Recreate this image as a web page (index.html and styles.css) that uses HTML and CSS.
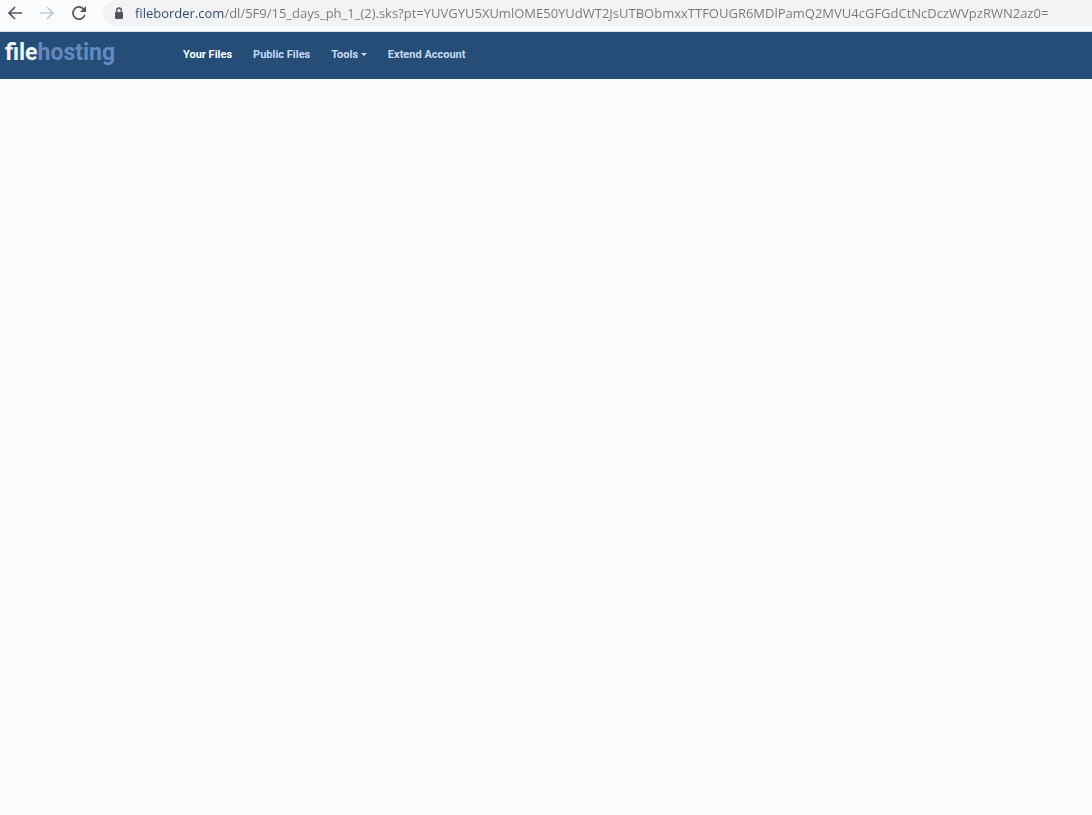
FILE: index.html
```html
<!DOCTYPE html>
<html lang="en">
<head>
    <meta charset="UTF-8">
    <meta name="viewport" content="width=device-width, initial-scale=1.0">
    <title>filehosting</title>
    <link rel="stylesheet" href="styles.css">
</head>
<body>
    <!-- Browser toolbar -->
    <div class="toolbar">
        <button type="button" class="tool" aria-label="Back">
            <svg width="16" height="16" viewBox="0 0 16 16"><path d="M15 8H2M8 2L2 8l6 6"/></svg>
        </button>
        <button type="button" class="tool tool-forward" aria-label="Forward" disabled>
            <svg width="16" height="16" viewBox="0 0 16 16"><path d="M1 8h13M8 2l6 6-6 6"/></svg>
        </button>
        <button type="button" class="tool" aria-label="Reload">
            <svg width="16" height="16" viewBox="0 0 16 16"><path d="M13.8 10A6.1 6.1 0 1 1 12.4 3.8L14 5.4"/><path class="solid" d="M15 1v6H9z"/></svg>
        </button>
        <div class="address">
            <svg class="lock" width="10" height="13" viewBox="0 0 10 13"><rect x="1" y="5" width="8" height="7" rx="1"/><path d="M2.7 6V3.3a2.3 2.3 0 0 1 4.6 0V6"/></svg>
            <input type="text" class="url" aria-label="Address" spellcheck="false" value="fileborder.com/dl/5F9/15_days_ph_1_(2).sks?pt=YUVGYU5XUmlOME50YUdWT2JsUTBObmxxTTFOUGR6MDlPamQ2MVU4cGFGdCtNcDczWVpzRWN2az0=">
        </div>
    </div>

    <!-- Site header -->
    <header class="navbar">
        <a href="#" class="brand"><span class="brand-file">file</span>hosting</a>
        <nav class="menu">
            <a href="#" class="active">Your Files</a>
            <a href="#">Public Files</a>
            <a href="#">Tools <span class="caret"></span></a>
            <a href="#">Extend Account</a>
        </nav>
    </header>

    <main class="content"></main>
</body>
</html>
```

FILE: styles.css
```css
* {
    box-sizing: border-box;
}

body {
    margin: 0;
    min-height: 100vh;
    display: flex;
    flex-direction: column;
    background-color: #fafbfd;
    font-family: Roboto, Arial, sans-serif;
}

/* Browser toolbar */
.toolbar {
    display: flex;
    align-items: center;
    height: 32px;
    padding: 0 0 5px 7px;
    background-color: #fbfcfd;
    border-bottom: 1px solid #d3e1f0;
}

.tool {
    width: 16px;
    height: 16px;
    margin-right: 16px;
    padding: 0;
    border: none;
    background: none;
}

.tool svg {
    display: block;
    fill: none;
    stroke: #55535c;
    stroke-width: 1.7;
}

.tool-forward svg {
    stroke: #bdc8d0;
}

.tool .solid {
    fill: #55535c;
    stroke: none;
}

/* Address field */
.address {
    display: flex;
    align-items: center;
    flex: 1;
    min-width: 0;
    height: 26px;
    padding-left: 11px;
    background-color: #f1f3f5;
    border-radius: 13px 0 0 13px;
}

.lock {
    flex: none;
    margin-right: 11px;
    fill: #55535c;
}

.lock path {
    fill: none;
    stroke: #55535c;
    stroke-width: 1.4;
}

/* The host name is darker than the rest of the address */
.url {
    flex: 1;
    min-width: 0;
    height: 24px;
    padding: 0;
    border: none;
    outline: none;
    background: linear-gradient(90deg, #2d4468 89px, #77777b 89px);
    -webkit-background-clip: text;
    background-clip: text;
    color: transparent;
    font-family: "Open Sans", "Noto Sans", sans-serif;
    font-size: 13px;
}

/* Site header */
.navbar {
    display: flex;
    align-items: center;
    height: 47px;
    padding: 0 0 2px 5px;
    background-color: #254d78;
}

.brand {
    width: 178px;
    padding-bottom: 3px;
    color: #6289c0;
    font-size: 23px;
    font-weight: 700;
    line-height: 28px;
    text-decoration: none;
}

.brand-file {
    color: #f3f8ff;
}

.menu {
    display: flex;
    gap: 21px;
}

.menu a {
    color: #c7dbf3;
    font-size: 11px;
    font-weight: 700;
    line-height: 16px;
    text-decoration: none;
    white-space: nowrap;
}

.menu .active {
    color: #fff;
}

.caret {
    display: inline-block;
    vertical-align: middle;
    border: 3px solid transparent;
    border-top-color: #c7dbf3;
    border-bottom: none;
}

.content {
    flex: 1;
}
```
